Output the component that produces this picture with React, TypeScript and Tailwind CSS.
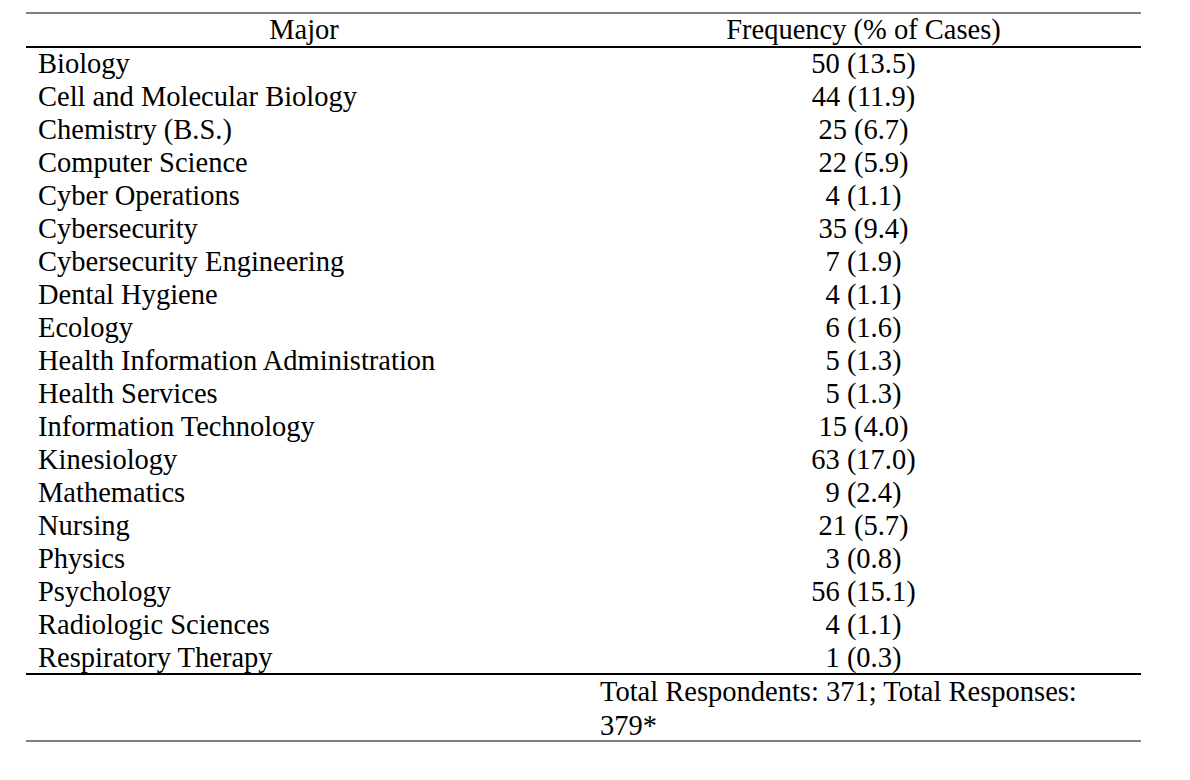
import React from "react";

const rows: [string, string][] = [
  ["Biology", "50 (13.5)"],
  ["Cell and Molecular Biology", "44 (11.9)"],
  ["Chemistry (B.S.)", "25 (6.7)"],
  ["Computer Science", "22 (5.9)"],
  ["Cyber Operations", "4 (1.1)"],
  ["Cybersecurity", "35 (9.4)"],
  ["Cybersecurity Engineering", "7 (1.9)"],
  ["Dental Hygiene", "4 (1.1)"],
  ["Ecology", "6 (1.6)"],
  ["Health Information Administration", "5 (1.3)"],
  ["Health Services", "5 (1.3)"],
  ["Information Technology", "15 (4.0)"],
  ["Kinesiology", "63 (17.0)"],
  ["Mathematics", "9 (2.4)"],
  ["Nursing", "21 (5.7)"],
  ["Physics", "3 (0.8)"],
  ["Psychology", "56 (15.1)"],
  ["Radiologic Sciences", "4 (1.1)"],
  ["Respiratory Therapy", "1 (0.3)"],
];

export default function App() {
  return (
    <div className="w-[1190px] h-[780px] bg-white pt-[12px] pl-[26px] text-black font-['Liberation_Serif','Times_New_Roman',serif] text-[28.5px]">
      <div className="w-[1115px] border-t-2 border-[#808080]">
        <div className="grid grid-cols-[556px_559px] h-[34px] leading-[32px] border-b-2 border-black">
          <div className="text-center px-[12px] whitespace-nowrap">Major</div>
          <div className="text-center pl-[18px] pr-[14px] whitespace-nowrap">Frequency (% of Cases)</div>
        </div>
        <div className="flex flex-col">
          {rows.map(([m, f]) => (
            <div key={m} className="grid grid-cols-[556px_559px] h-[33px] last:h-[31px] leading-[32px]">
              <div className="px-[12px] whitespace-nowrap">{m}</div>
              <div className="text-center pl-[18px] pr-[14px] whitespace-nowrap">{f}</div>
            </div>
          ))}
        </div>
        <div className="grid grid-cols-[556px_559px] h-[69px] border-t-2 border-black border-b-2 border-b-[#808080]">
          <div />
          <div className="pl-[18px] pr-[14px] leading-[34px]">Total Respondents: 371; Total Responses: 379*</div>
        </div>
      </div>
    </div>
  );
}
